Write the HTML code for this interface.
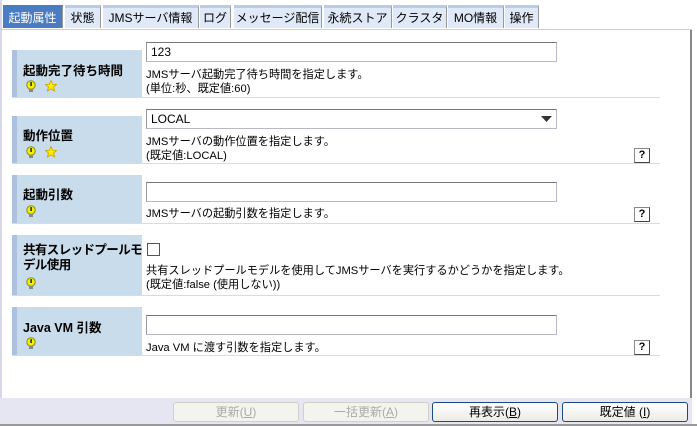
<!DOCTYPE html><html><head><meta charset="utf-8"><style>
body{margin:0;width:697px;height:426px;background:#fff;font-family:"Liberation Sans","Noto Sans CJK JP",sans-serif;font-size:12px;color:#000;position:relative;overflow:hidden}
.a{position:absolute}
.tab{position:absolute;top:5px;height:23px;background:#dfe9f8;border-top:3px solid #b8cbe8;border-right:1px solid #999;box-sizing:border-box;line-height:20px;text-align:center;font-size:12px;white-space:nowrap}
.lab{position:absolute;left:12px;width:130px;background:#c9dceb;border-left:5px solid #adc0df;box-sizing:border-box;font-weight:bold;padding-left:6px;font-size:12.5px;white-space:nowrap}
.sep{position:absolute;left:12px;width:648px;height:1px;background:#cde0ea}
.inp{position:absolute;left:146px;width:411px;height:20px;box-sizing:border-box;border:1px solid #b8b8c8;border-top-color:#777;border-left-color:#999;padding-left:4px;line-height:18px;font-size:12px}
.d{position:absolute;left:146px;line-height:14px;font-size:11.2px;white-space:nowrap}
.q{position:absolute;left:634px;width:16px;height:15px;border:1px solid #888;border-right-color:#444;border-bottom-color:#444;box-sizing:border-box;font-size:11px;font-weight:bold;text-align:center;line-height:13px;background:#fff}
.btn{position:absolute;top:402px;width:126px;height:20px;box-sizing:border-box;border-radius:3px;text-align:center;line-height:18px;font-size:12px}
.ic{position:absolute}
</style></head><body>
<svg width="0" height="0" style="position:absolute"><defs>
<g id="b"><circle cx="5" cy="5" r="4.2" fill="#f0f000" stroke="#8a8a20" stroke-width="1"/><rect x="4.3" y="2" width="1.6" height="4" fill="#333"/><rect x="3" y="9" width="4" height="3" fill="#888"/></g>
<g id="s"><polygon points="6,0.5 7.6,4.3 11.6,4.5 8.5,7 9.6,11 6,8.8 2.4,11 3.5,7 0.4,4.5 4.4,4.3" fill="#ffee00" stroke="#c8a000" stroke-width="0.8"/></g>
</defs></svg>
<div class="a" style="left:0;top:0;width:2px;height:400px;background:#d8d8ec"></div>
<div class="a" style="left:690px;top:30px;width:2px;height:370px;background:#888"></div>
<div class="a" style="left:0;top:29px;width:692px;height:1px;background:#ccd"></div>
<div class="tab" style="left:3px;width:60px;background:#4a7cc4;border-top-color:#4a7cc4;color:#fff">起動属性</div>
<div class="tab" style="left:65px;width:36px">状態</div>
<div class="tab" style="left:103px;width:96px">JMSサーバ情報</div>
<div class="tab" style="left:200px;width:31px">ログ</div>
<div class="tab" style="left:234px;width:88px">メッセージ配信</div>
<div class="tab" style="left:324px;width:68px">永続ストア</div>
<div class="tab" style="left:393px;width:54px">クラスタ</div>
<div class="tab" style="left:448px;width:56px">MO情報</div>
<div class="tab" style="left:505px;width:34px">操作</div>

<div class="lab" style="top:50px;height:47px;padding-top:10px">起動完了待ち時間</div>
<svg class="ic" style="left:26px;top:80px" width="12" height="13"><use href="#b"/></svg><svg class="ic" style="left:45px;top:80px" width="12" height="12"><use href="#s"/></svg>
<div class="inp" style="top:42px">123</div>
<div class="d" style="top:68px">JMSサーバ起動完了待ち時間を指定します。<br>(単位:秒、既定値:60)</div>
<div class="sep" style="top:97px"></div>

<div class="lab" style="top:116px;height:47px;padding-top:9px">動作位置</div>
<svg class="ic" style="left:26px;top:146px" width="12" height="13"><use href="#b"/></svg><svg class="ic" style="left:45px;top:146px" width="12" height="12"><use href="#s"/></svg>
<div class="inp" style="top:109px">LOCAL<svg style="position:absolute;right:4px;top:6px" width="11" height="6"><polygon points="0,0 11,0 5.5,6" fill="#333"/></svg></div>
<div class="d" style="top:135px">JMSサーバの動作位置を指定します。<br>(既定値:LOCAL)</div>
<div class="q" style="top:148px">?</div>
<div class="sep" style="top:163px"></div>

<div class="lab" style="top:175px;height:48px;padding-top:9px">起動引数</div>
<svg class="ic" style="left:26px;top:205px" width="12" height="13"><use href="#b"/></svg>
<div class="inp" style="top:182px"></div>
<div class="d" style="top:207px">JMSサーバの起動引数を指定します。</div>
<div class="q" style="top:207px">?</div>
<div class="sep" style="top:223px"></div>

<div class="lab" style="top:235px;height:60px;padding-top:8px;line-height:15px;letter-spacing:-0.6px">共有スレッドプールモ<br>デル使用</div>
<svg class="ic" style="left:26px;top:277px" width="12" height="13"><use href="#b"/></svg>
<div class="a" style="left:147px;top:243px;width:13px;height:13px;border:1px solid #555;box-sizing:border-box"></div>
<div class="d" style="top:264px">共有スレッドプールモデルを使用してJMSサーバを実行するかどうかを指定します。<br>(既定値:false (使用しない))</div>
<div class="sep" style="top:295px"></div>

<div class="lab" style="top:307px;height:48px;padding-top:10px">Java VM 引数</div>
<svg class="ic" style="left:26px;top:337px" width="12" height="13"><use href="#b"/></svg>
<div class="inp" style="top:315px"></div>
<div class="d" style="top:341px">Java VM に渡す引数を指定します。</div>
<div class="q" style="top:340px">?</div>
<div class="sep" style="top:355px"></div>

<div class="a" style="left:0;top:398px;width:692px;height:26px;background:#e6e6f2"></div>
<div class="a" style="left:0;top:424px;width:697px;height:2px;background:#999"></div>
<div class="btn" style="left:173px;background:#f4f4ee;border:1px solid #d0d0c4;color:#aaa">更新(<u>U</u>)</div>
<div class="btn" style="left:303px;background:#f4f4ee;border:1px solid #d0d0c4;color:#aaa">一括更新(<u>A</u>)</div>
<div class="btn" style="left:432px;background:linear-gradient(#fff,#ecebe6);border:1px solid #1c4a7c">再表示(<u>B</u>)</div>
<div class="btn" style="left:562px;background:linear-gradient(#fff,#ecebe6);border:1px solid #1c4a7c">既定値 (<u>I</u>)</div>
</body></html>
